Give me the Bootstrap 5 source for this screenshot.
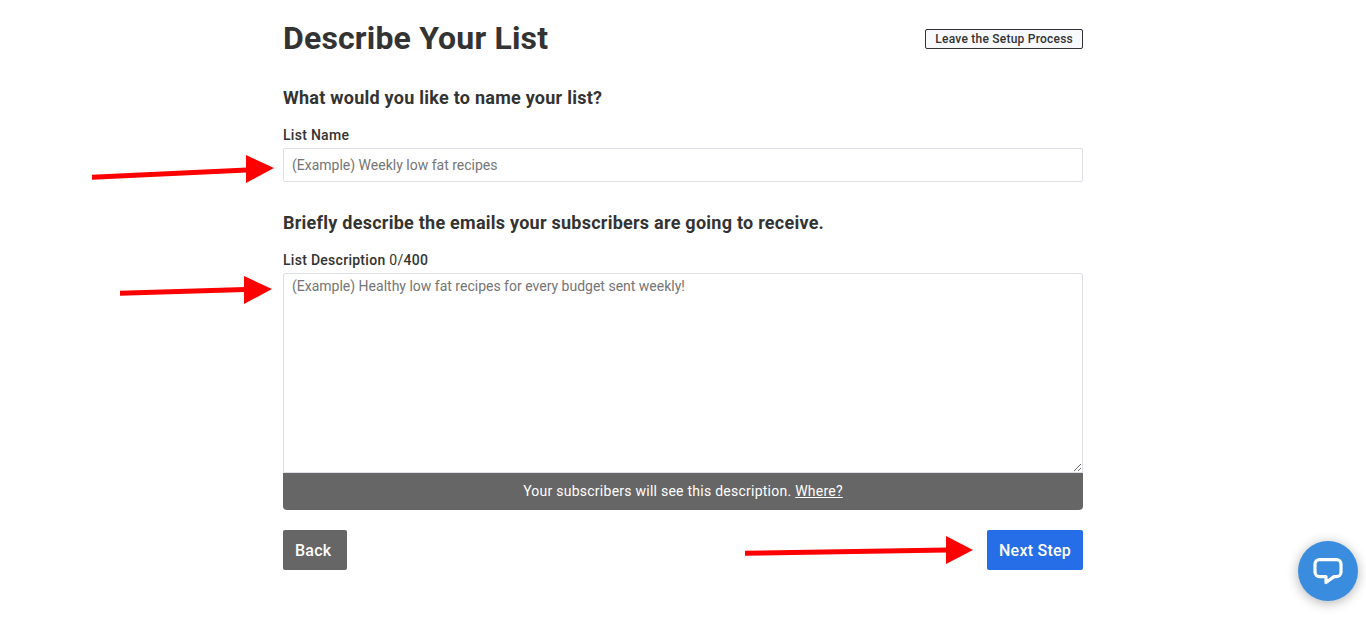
<!DOCTYPE html>
<html lang="en">
<head>
    <meta charset="UTF-8">
    <meta name="viewport" content="width=device-width, initial-scale=1.0">
    <title>Describe Your List</title>
    <link rel="stylesheet" href="https://cdn.jsdelivr.net/npm/bootstrap@5.3.0/dist/css/bootstrap.min.css">
    <style>
        html, body { height: 617px; overflow: hidden; }
        body {
            font-family: Roboto, "Liberation Sans", sans-serif;
            color: #333;
            background: #fff;
            letter-spacing: .25px;
        }
        .setup-wrap { width: 800px; margin-left: 283px; padding-top: 17px; }
        .page-title { font-size: 32px; font-weight: 700; line-height: 42px; margin: 0; letter-spacing: .17px; }
        .leave-btn {
            font-size: 12px; font-weight: 500; line-height: 14px; color: #333;
            background: #f8f9fd; border: 1px solid #333; border-radius: 2px;
            padding: 2px 9px; margin-top: 12px; letter-spacing: .23px;
        }
        .sub-title { font-size: 18px; font-weight: 700; line-height: 24px; margin: 0; }
        .first-sub { margin-top: 27px; }
        .second-sub { margin-top: 29px; }
        .field-label { font-size: 14px; font-weight: 500; line-height: 18px; margin: 16px 0 4px; display: block; letter-spacing: .28px; }
        .count-text { font-weight: 400; }
        .setup-input {
            height: 34px; font-size: 14px; padding: 0 8px; color: #333;
            border: 1px solid #dcdfe6; border-radius: 2px;
        }
        .setup-area {
            height: 200px; font-size: 14px; line-height: 18px; padding: 3px 8px; color: #333;
            border: 1px solid #dcdfe6; border-radius: 2px 2px 0 0;
        }
        .setup-input::placeholder, .setup-area::placeholder { color: #757575; opacity: 1; }
        .desc-note {
            background: #666; color: #fff; height: 37px; line-height: 37px;
            font-size: 14px; text-align: center; border-radius: 0 0 4px 4px;
        }
        .desc-note a { color: #fff; }
        .step-btn {
            height: 40px; font-size: 16px; font-weight: 500; color: #fff; border: 0;
            border-radius: 2px; padding: 2px 0 0 12px; text-align: left; white-space: nowrap; letter-spacing: .25px;
        }
        .back-btn { background: #666; width: 64px; }
        .next-btn { background: #266de8; width: 96px; }
        .step-row { margin-top: 20px; }
        .arrow-layer { position: absolute; left: 0; top: 0; pointer-events: none; }
        .chat-bubble {
            position: fixed; left: 1298px; top: 541px; width: 60px; height: 60px;
            border-radius: 50%; background: #3a8cdf; border: 0; padding: 0;
            box-shadow: 0 2px 12px rgba(0, 0, 0, .3);
        }
    </style>
</head>
<body>
    <div class="setup-wrap">
        <div class="d-flex justify-content-between align-items-start">
            <h1 class="page-title">Describe Your List</h1>
            <button type="button" class="leave-btn">Leave the Setup Process</button>
        </div>

        <h2 class="sub-title first-sub">What would you like to name your list?</h2>
        <label class="field-label" for="listName">List Name</label>
        <input id="listName" type="text" class="form-control setup-input" placeholder="(Example) Weekly low fat recipes">

        <h2 class="sub-title second-sub">Briefly describe the emails your subscribers are going to receive.</h2>
        <label class="field-label" for="listDesc">List Description <span class="count-text">0/</span>400</label>
        <textarea id="listDesc" class="form-control setup-area" placeholder="(Example) Healthy low fat recipes for every budget sent weekly!"></textarea>
        <div class="desc-note">Your subscribers will see this description. <a href="#">Where?</a></div>

        <div class="d-flex justify-content-between step-row">
            <button type="button" class="step-btn back-btn">Back</button>
            <button type="button" class="step-btn next-btn">Next Step</button>
        </div>
    </div>

    <!-- red arrows drawn on top of the screenshot -->
    <svg class="arrow-layer" width="1366" height="617" viewBox="0 0 1366 617">
        <g fill="#f00" stroke="none">
            <path d="M92 174.800L247 167.500V172.500L92 179.800Z"/>
            <path d="M246 155L274 168L246 183Z"/>
            <path d="M120 290.800L245 287V292L120 295.800Z"/>
            <path d="M244 276L272 289L244 304Z"/>
            <path d="M745 550.800L947 547.500V552.500L745 555.800Z"/>
            <path d="M946 536L973 550L946 564Z"/>
        </g>
    </svg>

    <button type="button" class="chat-bubble" aria-label="Chat">
        <svg width="60" height="60" viewBox="0 0 60 60">
            <path d="M21.500 18.600H38.500A4.500 4.500 0 0 1 43 23.100V31.100A4.500 4.500 0 0 1 38.500 35.600H36L28 41.500V35.600H21.500A4.500 4.500 0 0 1 17 31.100V23.100A4.500 4.500 0 0 1 21.500 18.600Z" fill="none" stroke="#fff" stroke-width="3.200" stroke-linejoin="round"/>
        </svg>
    </button>

    <script src="https://cdn.jsdelivr.net/npm/bootstrap@5.3.0/dist/js/bootstrap.bundle.min.js"></script>
</body>
</html>
